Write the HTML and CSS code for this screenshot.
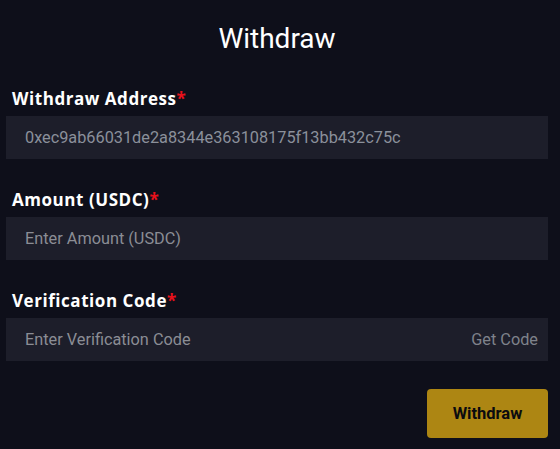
FILE: index.html
```html
<!DOCTYPE html>
<html>
<head>
<meta charset="utf-8">
<link rel="stylesheet" href="styles.css">
</head>
<body>
<div class="panel">
  <h1 class="title">Withdraw</h1>
  <div class="field">
    <label class="label">Withdraw Address<span class="req">*</span></label>
    <div class="input"><span class="value">0xec9ab66031de2a8344e363108175f13bb432c75c</span></div>
  </div>
  <div class="field">
    <label class="label">Amount (USDC)<span class="req">*</span></label>
    <div class="input"><span class="placeholder">Enter Amount (USDC)</span></div>
  </div>
  <div class="field">
    <label class="label">Verification Code<span class="req">*</span></label>
    <div class="input"><span class="placeholder">Enter Verification Code</span><span class="suffix">Get Code</span></div>
  </div>
  <div class="actions">
    <button class="btn">Withdraw</button>
  </div>
</div>
</body>
</html>
```

FILE: styles.css
```css
html, body {
  margin: 0;
  padding: 0;
  background: #0e0f1a;
  height: 100%;
}
.panel {
  padding: 22px 12px 0 6px;
  font-family: Roboto, "Liberation Sans", sans-serif;
  color: #ffffff;
}
.title {
  margin: 0 0 31px;
  font-size: 28px;
  font-weight: 400;
  line-height: 1.2;
  text-align: center;
  color: #ffffff;
}
.field {
  display: flex;
  flex-direction: column;
  gap: 5px;
  margin-bottom: 29px;
}
.label {
  display: block;
  padding-left: 6px;
  font-family: "Open Sans", Lato, sans-serif;
  font-weight: 700;
  font-size: 17px;
  line-height: 24px;
  letter-spacing: 0.55px;
  color: #ffffff;
}
.req {
  color: #e8111b;
  letter-spacing: 0;
}
.input {
  height: 43px;
  box-sizing: border-box;
  background: #1d1e2a;
  display: flex;
  align-items: center;
  justify-content: space-between;
  padding: 0 10px 0 19px;
  font-size: 16.3px;
}
.value {
  color: #8b909b;
}
.placeholder {
  color: #8b8d95;
}
.suffix {
  color: #7f828b;
}
.actions {
  display: flex;
  justify-content: flex-end;
  margin-top: -1px;
}
.btn {
  width: 121px;
  height: 49px;
  border: none;
  border-radius: 4px;
  background: #ad8613;
  color: #0b0b0f;
  font-family: Roboto, "Liberation Sans", sans-serif;
  font-size: 16.5px;
  font-weight: 700;
}
```
